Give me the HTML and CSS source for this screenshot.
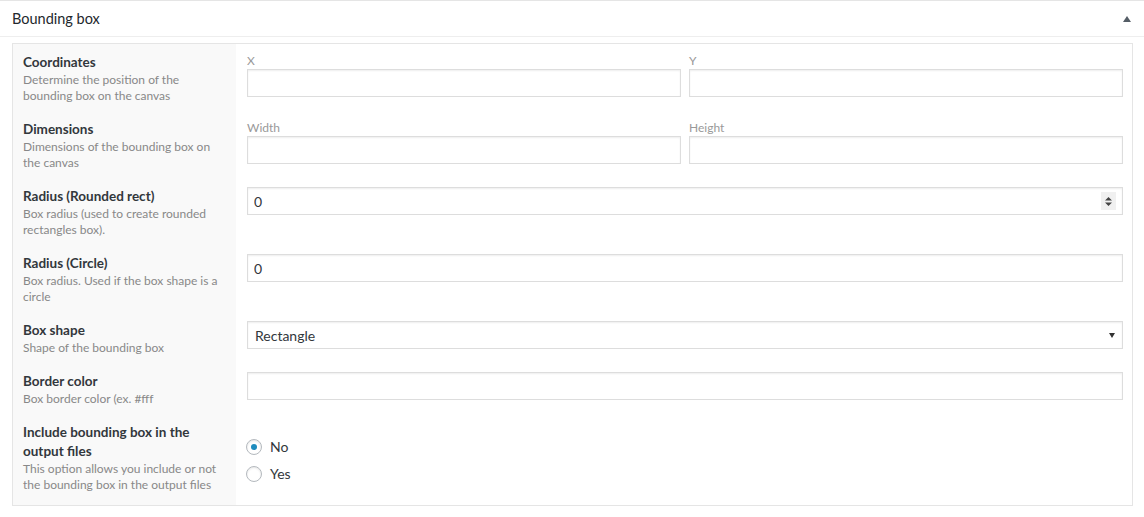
FILE: index.html
```html
<!DOCTYPE html>
<html lang="en">
<head>
    <meta charset="UTF-8">
    <title>Bounding box</title>
    <link rel="stylesheet" href="styles.css">
</head>
<body>
    <div class="postbox">
        <div class="postbox-header">
            <h2>Bounding box</h2>
            <span class="toggle-arrow"></span>
        </div>

        <div class="fields">
            <!-- coordinates -->
            <div class="field">
                <div class="field-label">
                    <strong>Coordinates</strong>
                    <p>Determine the position of the bounding box on the canvas</p>
                </div>
                <div class="field-input">
                    <div class="pair">
                        <label>X<input type="text"></label>
                        <label>Y<input type="text"></label>
                    </div>
                </div>
            </div>

            <div class="field">
                <div class="field-label">
                    <strong>Dimensions</strong>
                    <p>Dimensions of the bounding box on the canvas</p>
                </div>
                <div class="field-input">
                    <div class="pair">
                        <label>Width<input type="text"></label>
                        <label>Height<input type="text"></label>
                    </div>
                </div>
            </div>

            <div class="field">
                <div class="field-label">
                    <strong>Radius (Rounded rect)</strong>
                    <p>Box radius (used to create rounded rectangles box).</p>
                </div>
                <div class="field-input">
                    <div class="number-box">
                        <input type="text" value="0">
                        <span class="spinner">
                            <svg width="9" height="11" viewBox="0 0 9 11"><path d="M4.5 1L8 4.5H1z M1 6.5h7L4.5 10z" fill="#444"/></svg>
                        </span>
                    </div>
                </div>
            </div>

            <div class="field">
                <div class="field-label">
                    <strong>Radius (Circle)</strong>
                    <p>Box radius. Used if the box shape is a circle</p>
                </div>
                <div class="field-input">
                    <input type="text" value="0">
                </div>
            </div>

            <div class="field">
                <div class="field-label">
                    <strong>Box shape</strong>
                    <p>Shape of the bounding box</p>
                </div>
                <div class="field-input">
                    <div class="select-box">
                        <select>
                            <option>Rectangle</option>
                            <option>Circle</option>
                        </select>
                        <svg width="6" height="5" viewBox="0 0 6 5"><path d="M0 0h6L3 5z" fill="#333"/></svg>
                    </div>
                </div>
            </div>

            <div class="field">
                <div class="field-label">
                    <strong>Border color</strong>
                    <p>Box border color (ex. #fff</p>
                </div>
                <div class="field-input">
                    <input type="text">
                </div>
            </div>

            <div class="field">
                <div class="field-label">
                    <strong>Include bounding box in the output files</strong>
                    <p>This option allows you include or not the bounding box in the output files</p>
                </div>
                <div class="field-input">
                    <ul class="radios">
                        <li><label><input type="radio" name="include" checked> No</label></li>
                        <li><label><input type="radio" name="include"> Yes</label></li>
                    </ul>
                </div>
            </div>
        </div>
    </div>
</body>
</html>
```

FILE: styles.css
```css
body {
    margin: 0;
    background: #fff;
    font-family: 'Lato', 'Noto Sans', sans-serif;
    color: #32373c;
}
.postbox {
    border-top: 1px solid #e5e5e5;
    padding-bottom: 11px;
}
.postbox-header {
    display: flex;
    align-items: center;
    justify-content: space-between;
    height: 35px;
    padding: 0 12px;
    border-bottom: 1px solid #eee;
}
.postbox-header h2 {
    margin: 0;
    font-size: 14.5px;
    font-weight: 400;
    color: #23282d;
}
.toggle-arrow {
    width: 0;
    height: 0;
    border-left: 4px solid transparent;
    border-right: 4px solid transparent;
    border-bottom: 6px solid #555d66;
    margin-right: 1px;
}
.fields {
    margin: 6px 11px 0 12px;
    border: 1px solid #e5e5e5;
}
.field {
    display: grid;
    grid-template-columns: 223px 1fr;
}
.field-label {
    background: #f9f9f9;
    padding: 9px 12px 7px 10px;
}
.field:last-child .field-label {
    padding-bottom: 12px;
}
.field-label strong {
    display: block;
    font-size: 13.5px;
    line-height: 19px;
    font-weight: 700;
    color: #32373c;
}
.field-label p {
    margin: 0;
    font-size: 12px;
    line-height: 16px;
    color: #888;
}
.field-input {
    padding: 9px 9px 7px 11px;
}
.pair {
    display: flex;
    gap: 8px;
}
.pair label {
    flex: 1;
    display: flex;
    flex-direction: column;
    font-size: 12px;
    line-height: 16px;
    color: #999;
}
input[type="text"],
.number-box,
.select-box {
    box-sizing: border-box;
    width: 100%;
    height: 28px;
    margin: 0;
    border: 1px solid #ddd;
    box-shadow: inset 0 1px 2px rgba(0, 0, 0, 0.07);
    background: #fff;
    font-family: inherit;
    font-size: 14px;
    color: #32373c;
    padding: 0 6px;
    outline: none;
}
.number-box,
.select-box {
    display: flex;
    align-items: center;
}
.number-box input[type="text"] {
    border: none;
    box-shadow: none;
    padding: 0;
    height: 26px;
    background: transparent;
}
.spinner {
    display: flex;
    align-items: center;
    justify-content: center;
    width: 15px;
    height: 18px;
    background: #f0f0f0;
    flex-shrink: 0;
}
.select-box {
    padding: 0 7px 0 0;
}
.select-box select {
    flex: 1;
    appearance: none;
    -webkit-appearance: none;
    border: none;
    background: transparent;
    font-family: inherit;
    font-size: 14px;
    color: #32373c;
    padding: 0 7px;
    height: 26px;
    outline: none;
}
.radios {
    list-style: none;
    margin: 10px 0 0;
    padding: 0;
}
.radios li {
    height: 27px;
    display: flex;
    align-items: center;
}
.radios label {
    display: flex;
    align-items: center;
    gap: 8px;
    font-size: 14px;
    color: #32373c;
}
.radios input {
    appearance: none;
    -webkit-appearance: none;
    box-sizing: border-box;
    width: 16px;
    height: 16px;
    margin: 0 0 0 -1px;
    border: 1px solid #b4b9be;
    border-radius: 50%;
    box-shadow: inset 0 1px 2px rgba(0, 0, 0, 0.1);
    display: flex;
    align-items: center;
    justify-content: center;
}
.radios input:checked::before {
    content: "";
    width: 6px;
    height: 6px;
    border-radius: 50%;
    background: #1e8cbe;
}
```
